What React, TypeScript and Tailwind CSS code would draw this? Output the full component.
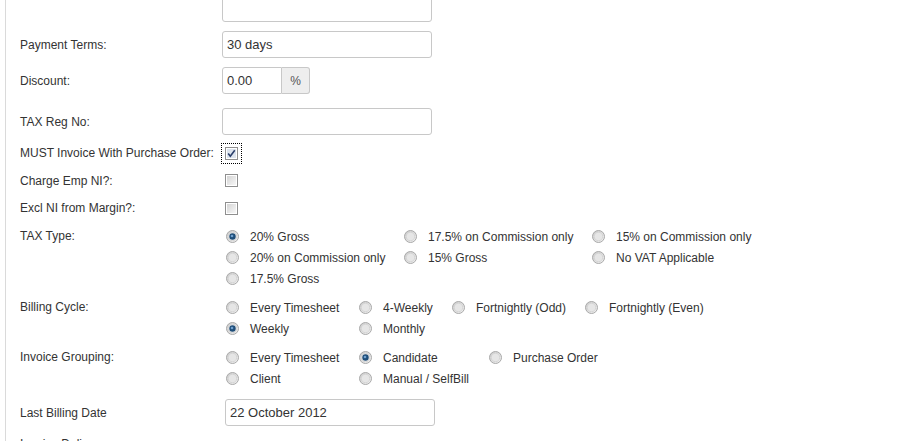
import React from "react";

function Radio({ checked }: { checked?: boolean }) {
  return (
    <svg width="13" height="13" viewBox="0 0 13 13" className="shrink-0">
      <defs>
        <linearGradient id={checked ? "rg1" : "rg0"} x1="0" y1="0" x2="1" y2="1">
          <stop offset="0" stopColor="#c9c9c9" />
          <stop offset="1" stopColor="#f4f4f4" />
        </linearGradient>
      </defs>
      <circle cx="6.5" cy="6.5" r="6" fill={`url(#${checked ? "rg1" : "rg0"})`} stroke="#a9a9a9" />
      <circle cx="6.5" cy="6.5" r="4.2" fill="#e6e6e6" stroke="#d2d2d2" strokeWidth="0.8" />
      {checked && <circle cx="6.5" cy="6.5" r="3.2" fill="#1f4e79" />}
      {checked && <circle cx="6" cy="6" r="1.3" fill="#6fa0cf" />}
    </svg>
  );
}

function Check({ checked }: { checked?: boolean }) {
  return (
    <svg width="13" height="13" viewBox="0 0 13 13" className="shrink-0">
      <defs>
        <linearGradient id="cg" x1="0" y1="0" x2="1" y2="1">
          <stop offset="0" stopColor="#d4d4d4" />
          <stop offset="1" stopColor="#f7f7f7" />
        </linearGradient>
      </defs>
      <rect x="0.5" y="0.5" width="12" height="12" fill="#fff" stroke="#8f8f8f" />
      <rect x="2" y="2" width="9" height="9" fill={checked ? "#dde4ee" : "url(#cg)"} />
      {checked && <path d="M3.2 6.6 L5.3 9.3 L9.8 3.2" fill="none" stroke="#2a3f6b" strokeWidth="1.6" />}
    </svg>
  );
}

type Opt = { label: string; checked?: boolean };

function RadioGrid({ rows, cols }: { rows: Opt[][]; cols: string }) {
  return (
    <div className="pl-[4px]">
      {rows.map((row, i) => (
        <div key={i} className={`grid ${cols} h-[21px] items-center`}>
          {row.map((o, j) => (
            <div key={j} className="flex items-center gap-[11px]">
              {o.label && <Radio checked={o.checked} />}
              <span>{o.label}</span>
            </div>
          ))}
        </div>
      ))}
    </div>
  );
}

const Label = ({ children, top }: { children: React.ReactNode; top?: boolean }) => (
  <div className={`w-[202px] shrink-0 ${top ? "leading-[21px]" : ""}`}>{children}</div>
);

const inputCls =
  "h-[27px] border border-[#c8c8c8] rounded-[3px] px-[4px] text-[13px] text-[#333] bg-white outline-none";

export default function App() {
  return (
    <div
      className="min-h-screen bg-white text-[12px] text-[#333] overflow-hidden"
      style={{ fontFamily: '"Liberation Sans", Arial, sans-serif' }}
    >
      <div className="ml-[5px] border-l border-[#dadada] pl-[14px] min-h-[441px]">
        <div className="-mt-[5px]">
          <div className="flex items-center">
            <Label>&nbsp;</Label>
            <input readOnly className={`${inputCls} w-[210px]`} />
          </div>

          <div className="flex items-center mt-[9px]">
            <Label>Payment Terms:</Label>
            <input readOnly defaultValue="30 days" className={`${inputCls} w-[210px]`} />
          </div>

          <div className="flex items-center mt-[9px]">
            <Label>Discount:</Label>
            <div className="flex">
              <input readOnly defaultValue="0.00" className={`${inputCls} w-[60px] rounded-r-none`} />
              <div className="h-[27px] w-[28px] border border-l-0 border-[#c8c8c8] rounded-r-[3px] bg-[#eeeeee] flex items-center justify-center text-[12px] text-[#555]">
                %
              </div>
            </div>
          </div>

          <div className="flex items-center mt-[14px]">
            <Label>TAX Reg No:</Label>
            <input readOnly className={`${inputCls} w-[210px]`} />
          </div>

          <div className="flex items-center h-[28px] mt-[4px]">
            <Label>MUST Invoice With Purchase Order:</Label>
            <div className="border border-dotted border-black px-[3px] py-[3px] -ml-[1px]">
              <Check checked />
            </div>
          </div>
          <div className="flex items-center h-[27px]">
            <Label>Charge Emp NI?:</Label>
            <div className="pl-[3px]">
              <Check />
            </div>
          </div>
          <div className="flex items-center h-[28px]">
            <Label>Excl NI from Margin?:</Label>
            <div className="pl-[3px]">
              <Check />
            </div>
          </div>

          <div className="flex items-start mt-[4px]">
            <Label top>TAX Type:</Label>
            <RadioGrid
              cols="grid-cols-[178px_188px_auto]"
              rows={[
                [{ label: "20% Gross", checked: true }, { label: "17.5% on Commission only" }, { label: "15% on Commission only" }],
                [{ label: "20% on Commission only" }, { label: "15% Gross" }, { label: "No VAT Applicable" }],
                [{ label: "17.5% Gross" }],
              ]}
            />
          </div>

          <div className="flex items-start mt-[8px]">
            <Label top>Billing Cycle:</Label>
            <RadioGrid
              cols="grid-cols-[133px_93px_133px_auto]"
              rows={[
                [{ label: "Every Timesheet" }, { label: "4-Weekly" }, { label: "Fortnightly (Odd)" }, { label: "Fortnightly (Even)" }],
                [{ label: "Weekly", checked: true }, { label: "Monthly" }],
              ]}
            />
          </div>

          <div className="flex items-start mt-[8px]">
            <Label top>Invoice Grouping:</Label>
            <RadioGrid
              cols="grid-cols-[133px_130px_auto]"
              rows={[
                [{ label: "Every Timesheet" }, { label: "Candidate", checked: true }, { label: "Purchase Order" }],
                [{ label: "Client" }, { label: "Manual / SelfBill" }],
              ]}
            />
          </div>

          <div className="flex items-center mt-[10px]">
            <Label>Last Billing Date</Label>
            <input readOnly defaultValue="22 October 2012" className={`${inputCls} w-[210px] ml-[3px] px-[4px]`} />
          </div>

          <div className="flex items-start mt-[8px]">
            <Label top>Invoice Delivery:</Label>
          </div>
        </div>
      </div>
    </div>
  );
}
